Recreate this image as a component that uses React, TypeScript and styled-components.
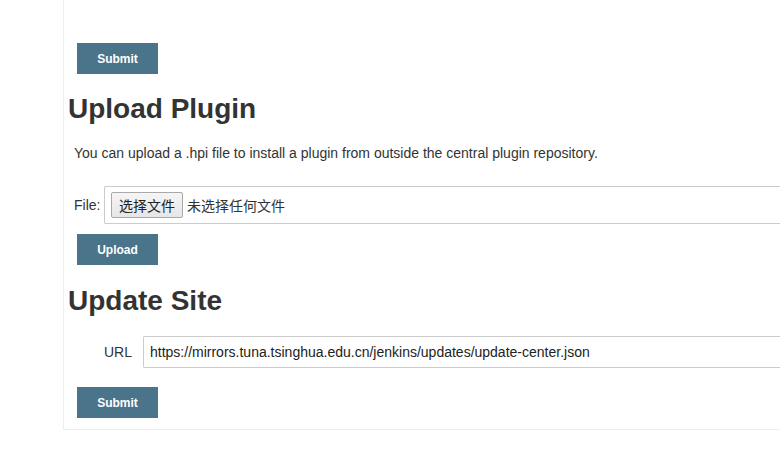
import styled, { createGlobalStyle } from 'styled-components'

const GlobalStyle = createGlobalStyle`
  html, body {
    margin: 0;
    padding: 0;
    background: #fff;
    overflow: hidden;
  }
  body {
    font-family: 'Liberation Sans', Arial, 'Noto Sans CJK SC', sans-serif;
    color: #333;
  }
`

const Page = styled.div`
  width: 100%;
  height: 450px;
`

const Panel = styled.div`
  margin-left: 63px;
  padding: 43px 0 11px 0;
  border-left: 1px solid #eee;
  border-bottom: 1px solid #eee;
  display: flex;
  flex-direction: column;
  align-items: flex-start;
`

const Button = styled.button<{ $top?: number }>`
  width: 81px;
  height: 31px;
  margin: ${(p) => p.$top ?? 0}px 0 0 13px;
  border: none;
  border-radius: 0;
  background: #4a7489;
  color: #fff;
  font-family: 'Liberation Sans', Arial, sans-serif;
  font-size: 12px;
  font-weight: 700;
  cursor: pointer;
`

const Heading = styled.h1<{ $gap: number }>`
  margin: ${(p) => p.$gap}px 0 0 4px;
  font-size: 28px;
  line-height: 32px;
  font-weight: 700;
  color: #333;
`

const Note = styled.p`
  margin: 19px 0 0 10px;
  font-size: 14px;
  line-height: 18px;
  color: #333;
`

const Row = styled.div<{ $top: number; $indent: number }>`
  align-self: stretch;
  display: flex;
  align-items: center;
  margin: ${(p) => p.$top}px 0 10px ${(p) => p.$indent}px;
`

const Label = styled.span<{ $width: number }>`
  width: ${(p) => p.$width}px;
  font-size: 14px;
  color: #333;
`

// the field runs on past the right edge of the window
const FileBox = styled.div`
  flex: 1;
  height: 38px;
  box-sizing: border-box;
  border: 1px solid #ccc;
  border-right: none;
  border-radius: 2px 0 0 2px;
  display: flex;
  align-items: center;
  padding-left: 6px;
  gap: 4px;
  font-family: 'Liberation Sans', 'Noto Sans CJK SC', sans-serif;
  font-size: 14px;
  color: #333;
`

const PickButton = styled.span`
  height: 26px;
  box-sizing: border-box;
  padding: 0 7px;
  display: flex;
  align-items: center;
  border: 1px solid #a9a9a9;
  border-radius: 2px;
  background: linear-gradient(#f5f5f5, #e6e6e6);
  color: #222;
`

const UrlInput = styled.input`
  flex: 1;
  min-width: 0;
  height: 32px;
  box-sizing: border-box;
  border: 1px solid #ccc;
  border-right: none;
  border-radius: 2px 0 0 2px;
  padding: 0 6px;
  font-family: 'Liberation Sans', Arial, sans-serif;
  font-size: 14px;
  color: #222;
  outline: none;
`

function App() {
  return (
    <Page>
      <GlobalStyle />
      <Panel>
        <Button>Submit</Button>
        <Heading $gap={19}>Upload Plugin</Heading>
        <Note>You can upload a .hpi file to install a plugin from outside the central plugin repository.</Note>
        <Row $top={24} $indent={10}>
          <Label $width={30}>File:</Label>
          <FileBox>
            <PickButton>选择文件</PickButton>
            <span>未选择任何文件</span>
          </FileBox>
        </Row>
        <Button>Upload</Button>
        <Heading $gap={20}>Update Site</Heading>
        <Row $top={19} $indent={40}>
          <Label $width={39}>URL</Label>
          <UrlInput defaultValue='https://mirrors.tuna.tsinghua.edu.cn/jenkins/updates/update-center.json' />
        </Row>
        <Button $top={9}>Submit</Button>
      </Panel>
    </Page>
  )
}

export default App
